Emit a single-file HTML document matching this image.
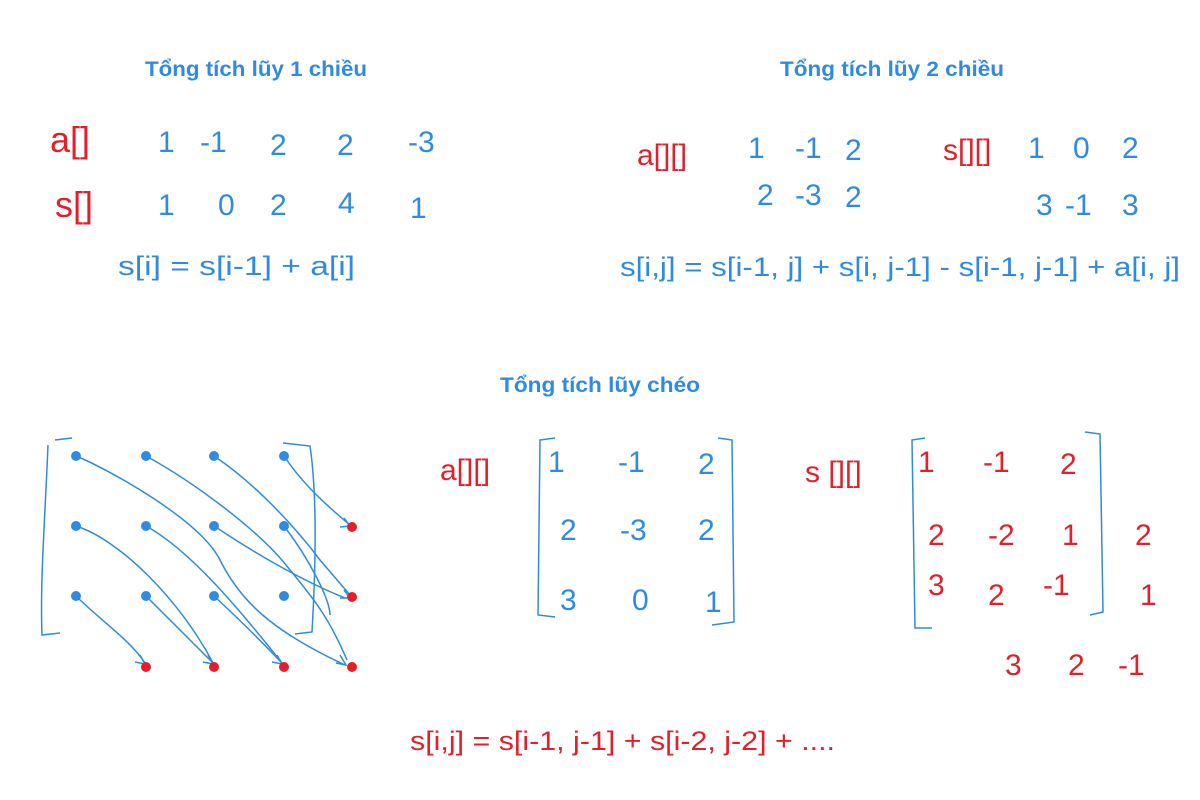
<!DOCTYPE html>
<html><head><meta charset="utf-8"><style>
html,body{margin:0;padding:0;background:#fff;width:1200px;height:800px;overflow:hidden}
svg{display:block}
.b{fill:#2f8be0}.r{fill:#e3202a}
text{font-family:"Liberation Sans",sans-serif}
.t{font-weight:bold;font-size:21px;fill:#2f8be0}
.h{font-size:30px;font-weight:300}
.f{font-size:27px}
</style></head><body>
<svg width="1200" height="800" viewBox="0 0 1200 800">
<text class="t" x="145" y="76" textLength="222" lengthAdjust="spacingAndGlyphs">Tổng tích lũy 1 chiều</text>
<text class="t" x="780" y="76" textLength="224" lengthAdjust="spacingAndGlyphs">Tổng tích lũy 2 chiều</text>
<text class="t" x="500" y="392" textLength="200" lengthAdjust="spacingAndGlyphs">Tổng tích lũy chéo</text>

<g class="r h"><text x="50" y="152" font-size="36">a[]</text><text x="55" y="217" font-size="36">s[]</text></g>
<g class="b h">
<text x="158" y="152">1</text><text x="200" y="152">-1</text><text x="270" y="155">2</text><text x="337" y="155">2</text><text x="408" y="152">-3</text>
<text x="158" y="215">1</text><text x="218" y="215">0</text><text x="270" y="215">2</text><text x="338" y="213">4</text><text x="410" y="218">1</text>
</g>
<text class="b f" x="118" y="275" textLength="237" lengthAdjust="spacingAndGlyphs">s[i] = s[i-1] + a[i]</text>

<text class="r h" x="637" y="165" font-size="36">a[][]</text>
<text class="r h" x="943" y="160" font-size="34">s[][]</text>
<g class="b h">
<text x="748" y="158">1</text><text x="795" y="158">-1</text><text x="845" y="160">2</text>
<text x="757" y="205">2</text><text x="795" y="205">-3</text><text x="845" y="207">2</text>
<text x="1028" y="158">1</text><text x="1073" y="158">0</text><text x="1122" y="158">2</text>
<text x="1036" y="215">3</text><text x="1065" y="215">-1</text><text x="1122" y="215">3</text>
</g>
<text class="b f" x="620" y="276" textLength="560" lengthAdjust="spacingAndGlyphs">s[i,j] = s[i-1, j] + s[i, j-1] - s[i-1, j-1] + a[i, j]</text>

<g fill="none" stroke="#2f8be0" stroke-width="1.5">
<path d="M55 440 L72 438 M48 445 C45 520 40 580 42 635 L60 633"/>
<path d="M283 443 L310 446 C318 500 315 580 312 632 L295 634"/>
<path d="M76 456 C110 470 200 520 220 560 C240 600 270 630 345 665"/>
<path d="M146 456 C190 480 260 530 290 570 C315 600 330 620 347 660"/>
<path d="M214 456 C250 480 290 520 320 560 L350 595"/>
<path d="M284 456 C300 480 320 500 350 525"/>
<path d="M76 526 C120 540 180 600 213 663"/>
<path d="M146 526 C190 550 240 610 282 663"/>
<path d="M214 526 C250 550 300 580 345 598"/>
<path d="M284 526 C310 560 330 600 330 615"/>
<path d="M76 596 C100 620 130 640 145 663"/>
<path d="M146 596 C170 620 190 640 213 663"/>
<path d="M214 596 C240 620 260 640 282 663"/>
<path d="M140 655 L145 664 L135 662 M208 655 L213 664 L203 662 M277 655 L282 664 L272 662 M340 655 L346 665 L336 663 M344 590 L350 598 L340 598 M344 518 L350 526 L340 527"/>
</g>
<g fill="#2f8be0">
<circle cx="76" cy="456" r="5"/><circle cx="146" cy="456" r="5"/><circle cx="214" cy="456" r="5"/><circle cx="284" cy="456" r="5"/>
<circle cx="76" cy="526" r="5"/><circle cx="146" cy="526" r="5"/><circle cx="214" cy="526" r="5"/><circle cx="284" cy="526" r="5"/>
<circle cx="76" cy="596" r="5"/><circle cx="146" cy="596" r="5"/><circle cx="214" cy="596" r="5"/><circle cx="284" cy="596" r="5"/>
</g>
<g fill="#e3202a">
<circle cx="352" cy="527" r="5"/><circle cx="352" cy="597" r="5"/>
<circle cx="146" cy="667" r="5"/><circle cx="214" cy="667" r="5"/><circle cx="284" cy="667" r="5"/><circle cx="352" cy="667" r="5"/>
</g>

<text class="r h" x="440" y="480" font-size="36">a[][]</text>
<g fill="none" stroke="#2f8be0" stroke-width="1.5">
<path d="M555 438 L540 440 L538 615 L555 617"/><path d="M718 438 L732 440 L734 622 L712 625"/>
<path d="M925 438 L912 440 L915 628 L932 628"/><path d="M1085 432 L1100 434 L1103 612 L1090 615"/>
</g>
<g class="b h">
<text x="548" y="472">1</text><text x="618" y="472">-1</text><text x="698" y="474">2</text>
<text x="560" y="540">2</text><text x="620" y="540">-3</text><text x="698" y="540">2</text>
<text x="560" y="610">3</text><text x="632" y="610">0</text><text x="705" y="612">1</text>
</g>
<text class="r h" x="805" y="482" font-size="34">s [][]</text>
<g class="r h">
<text x="918" y="472">1</text><text x="983" y="472">-1</text><text x="1060" y="474">2</text>
<text x="928" y="545">2</text><text x="988" y="545">-2</text><text x="1062" y="545">1</text><text x="1135" y="545">2</text>
<text x="928" y="595">3</text><text x="988" y="605">2</text><text x="1043" y="595">-1</text><text x="1140" y="605">1</text>
<text x="1005" y="675">3</text><text x="1068" y="675">2</text><text x="1118" y="675">-1</text>
</g>
<text class="r f" x="410" y="750" textLength="425" lengthAdjust="spacingAndGlyphs">s[i,j] = s[i-1, j-1] + s[i-2, j-2] + ....</text>
</svg>
</body></html>
